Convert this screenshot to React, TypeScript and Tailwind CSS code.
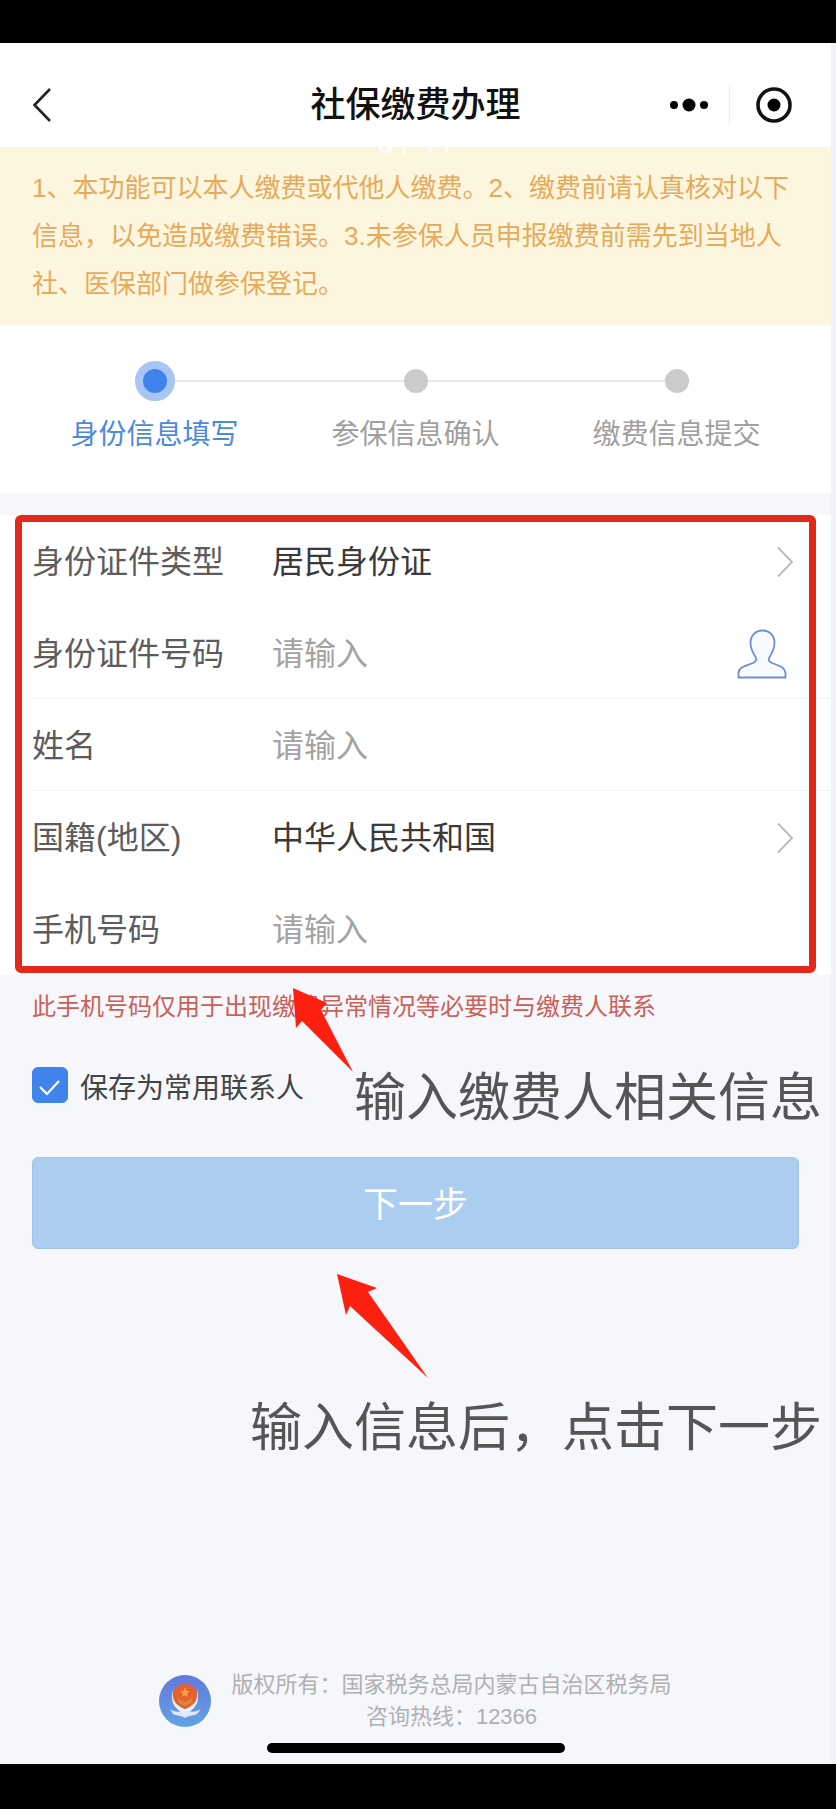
import React, { useState } from 'react';

interface FieldProps {
  id: string;
  label: string;
  divider?: boolean;
  children: React.ReactNode;
}

const steps = ['身份信息填写', '参保信息确认', '缴费信息提交'];

const Chevron = () => (
  <svg className="pointer-events-none absolute right-0 h-8 w-4" viewBox="0 0 16 32" fill="none" stroke="#b9b9b9" strokeWidth="1.8">
    <path d="M1 1.5 15 16 1 30.5" />
  </svg>
);

const PersonIcon = () => (
  <svg className="h-[50px] w-[50px]" viewBox="0 0 50 50" fill="#f7fbff" stroke="#6f8fd0" strokeWidth="1.8">
    <path d="M25.500 1.500C18.500 1.500 13.500 6.500 13.500 14C13.500 21 17 25 19 29C20 31.500 18.500 32.800 16 34C8 37 2 38 1.500 44V48.500H48.500V44C48 38 42.500 37 35 34C32.500 32.800 31 31.500 32 29C34.500 25 37.500 21 37.500 14C37.500 6.500 32.500 1.500 25.500 1.500Z" />
  </svg>
);

const Emblem = () => (
  <svg className="h-[52px] w-[52px] shrink-0" viewBox="0 0 52 52">
    <defs>
      <linearGradient id="emblem-bg" x1="0" y1="0" x2="0" y2="1">
        <stop offset="0" stopColor="#6478dc" />
        <stop offset="1" stopColor="#62a4e2" />
      </linearGradient>
    </defs>
    <circle cx="26" cy="26" r="26" fill="url(#emblem-bg)" />
    <path d="M11 34C17 38 21 37 26 34C31 37 35 38 42 34L38 39C35 41 30 40 26 43C22 40 17 41 14 39Z" fill="#dfe8fa" />
    <path d="M14 15C11 25 14 34 26 39C38 34 41 25 38 15C38 25 34 31 26 34C18 31 14 25 14 15Z" fill="#e9effb" />
    <path d="M26 9C32 9 37 13 38 18C39 26 34 31 26 34C18 31 13 26 14 18C15 13 20 9 26 9Z" fill="#e5622f" />
    <path d="M26 12 27.500 16H31L28 18.500 29 22 26 20 23 22 24 18.500 21 16H24.500Z" fill="#f8a446" />
    <path d="M18 23 26 27 34 23 31 29 26 31 21 29Z" fill="#d88a3c" />
  </svg>
);

const Field: React.FC<FieldProps> = ({ id, label, divider, children }) => (
  <div className={`ml-8 flex h-[92px] items-center border-b pt-0.5 pr-[38px] ${divider ? 'border-[#f3f3f3]' : 'border-[#fdfdfd]'}`}>
    <label htmlFor={id} className="w-60 shrink-0 text-[32px] leading-10 text-[#5c5c5c]">
      {label}
    </label>
    <div className="relative flex min-w-0 flex-1 items-center">{children}</div>
  </div>
);

const inputClass = 'h-12 w-full min-w-0 bg-transparent text-[32px] text-[#3a3a3a] outline-none placeholder:text-[#a3a3a3]';
const selectClass = 'h-12 w-full appearance-none bg-transparent text-[32px] text-[#3a3a3a] outline-none';

const App: React.FC = () => {
  const [saveContact, setSaveContact] = useState(true);

  return (
    <div className="flex min-h-screen flex-col border-t-[43px] border-b-[45px] border-black bg-[#edf3f8] pr-[5px] font-['Liberation_Sans','Noto_Sans_CJK_SC',sans-serif]">
      <div className="flex flex-1 flex-col bg-[#f5f7fb]">
        {/* Title bar */}
        <header className="relative grid h-[104px] grid-cols-3 items-center bg-white pt-5">
          <button type="button" aria-label="返回" className="ml-8 w-5">
            <svg className="h-9 w-5" viewBox="0 0 20 36" fill="none" stroke="#222" strokeWidth="2.6">
              <path d="M18 2 2.500 18 18 34" />
            </svg>
          </button>
          <h1 className="text-center text-[35px] leading-10 font-medium whitespace-nowrap text-[#111]">社保缴费办理</h1>
          <div className="mr-[39px] flex items-center justify-end">
            <button type="button" aria-label="更多">
              <svg className="h-9 w-10" viewBox="0 0 40 36">
                <circle cx="5" cy="18" r="4" />
                <circle cx="20" cy="18" r="6.500" />
                <circle cx="35" cy="18" r="4" />
              </svg>
            </button>
            <span className="mr-[22px] ml-5 h-10 w-px bg-[#eeeeee]" />
            <button type="button" aria-label="关闭" className="ml-1">
              <svg className="h-9 w-9" viewBox="0 0 36 36">
                <circle cx="18" cy="18" r="16" fill="none" stroke="#111" strokeWidth="3.600" />
                <circle cx="18" cy="18" r="6.500" />
              </svg>
            </button>
          </div>
          <span className="absolute inset-x-0 top-full -mt-5 text-center font-[Roboto] text-[30px] leading-8 text-white">6 / 11</span>
        </header>

        <p className="bg-[#fdf6df] px-8 py-[17px] text-[26px] leading-[48px] text-[#e6ab5a]">
          1、本功能可以本人缴费或代他人缴费。2、缴费前请认真核对以下信息，以免造成缴费错误。3.未参保人员申报缴费前需先到当地人社、医保部门做参保登记。
        </p>

        {/* Steps */}
        <ol className="grid grid-cols-3 bg-white px-6 pt-9 pb-[38px]">
          {steps.map((step, index) => (
            <li key={step} className="flex flex-col items-center gap-3.5">
              <div className="flex h-10 w-full items-center">
                <span className={`h-0.5 flex-1 ${index > 0 ? 'bg-[#e8e8e8]' : ''}`} />
                {index === 0 ? (
                  <span className="h-10 w-10 rounded-full border-8 border-[#a9c5f6] bg-[#3f83ec]" />
                ) : (
                  <span className="h-6 w-6 rounded-full bg-[#cbcbcb]" />
                )}
                <span className={`h-0.5 flex-1 ${index < steps.length - 1 ? 'bg-[#e8e8e8]' : ''}`} />
              </div>
              <span className={`text-[28px] leading-10 whitespace-nowrap ${index === 0 ? 'text-[#4a8add]' : 'text-[#a0a0a0]'}`}>
                {step}
              </span>
            </li>
          ))}
        </ol>

        <form className="mt-[22px] flex flex-col" onSubmit={(e) => e.preventDefault()}>
          <div className="relative bg-white">
            <Field id="idType" label="身份证件类型">
              <select id="idType" className={selectClass}>
                <option>居民身份证</option>
              </select>
              <Chevron />
            </Field>
            <Field id="idNumber" label="身份证件号码" divider>
              <input id="idNumber" placeholder="请输入" className={inputClass} />
              <button type="button" aria-label="常用联系人" className="mr-1.5 shrink-0">
                <PersonIcon />
              </button>
            </Field>
            <Field id="name" label="姓名" divider>
              <input id="name" placeholder="请输入" className={inputClass} />
            </Field>
            <Field id="country" label="国籍(地区)">
              <select id="country" className={selectClass}>
                <option>中华人民共和国</option>
              </select>
              <Chevron />
            </Field>
            <Field id="phone" label="手机号码">
              <input id="phone" type="tel" placeholder="请输入" className={inputClass} />
            </Field>
            <div className="pointer-events-none absolute top-0 right-[15px] bottom-0.5 left-[15px] rounded-md border-[7px] border-[#e4281c]" />
          </div>

          <p className="mt-4 px-8 text-2xl leading-8 text-[#c9605a]">此手机号码仅用于出现缴费异常情况等必要时与缴费人联系</p>

          <div className="relative mt-11 flex items-start justify-between pr-[9px] pl-8">
            <label className="flex items-start gap-3 text-[28px] leading-[44px] text-[#444]">
              <span className="relative flex h-9 w-9">
                <input
                  type="checkbox"
                  checked={saveContact}
                  onChange={(e) => setSaveContact(e.target.checked)}
                  className="h-9 w-9 appearance-none rounded-md border border-[#3f83ec] checked:bg-[#3f83ec]"
                />
                {saveContact && (
                  <svg className="pointer-events-none absolute inset-0 h-9 w-9" viewBox="0 0 36 36" fill="none" stroke="#fff" strokeWidth="2.200">
                    <path d="M8 20 15 27 27 14" />
                  </svg>
                )}
              </span>
              保存为常用联系人
            </label>
            <span className="text-[52px] leading-[62px] whitespace-nowrap text-[#555]">输入缴费人相关信息</span>
            <svg className="pointer-events-none absolute bottom-14 left-[292px] h-[86px] w-[62px]" viewBox="0 0 62 86" fill="#fb2010">
              <path d="M1 1 35 16 29 23 61 85 10 34 4 41Z" />
            </svg>
          </div>

          <button type="submit" className="mx-8 mt-7 h-[92px] rounded-md border border-[#a0c3e6] bg-[#abcdf0] pt-1 text-[35px] text-white">
            下一步
          </button>
        </form>

        <div className="relative mt-[148px] pr-[9px] text-right text-[52px] leading-[62px] text-[#555]">
          <svg className="pointer-events-none absolute bottom-20 left-[336px] h-[106px] w-[94px]" viewBox="0 0 94 106" fill="#fb2010">
            <path d="M1 1 41 15 32 19 92 105 14 33 10 42Z" />
          </svg>
          输入信息后，点击下一步
        </div>

        <footer className="mt-auto flex flex-col items-center pb-[11px]">
          <div className="flex items-center gap-5">
            <Emblem />
            <p className="text-center text-[22px] leading-8 text-[#b0b0b2]">
              版权所有：国家税务总局内蒙古自治区税务局
              <br />
              咨询热线：12366
            </p>
          </div>
          <div className="mt-2.5 h-2.5 w-[298px] rounded-full bg-black" />
        </footer>
      </div>
    </div>
  );
};

export default App;
